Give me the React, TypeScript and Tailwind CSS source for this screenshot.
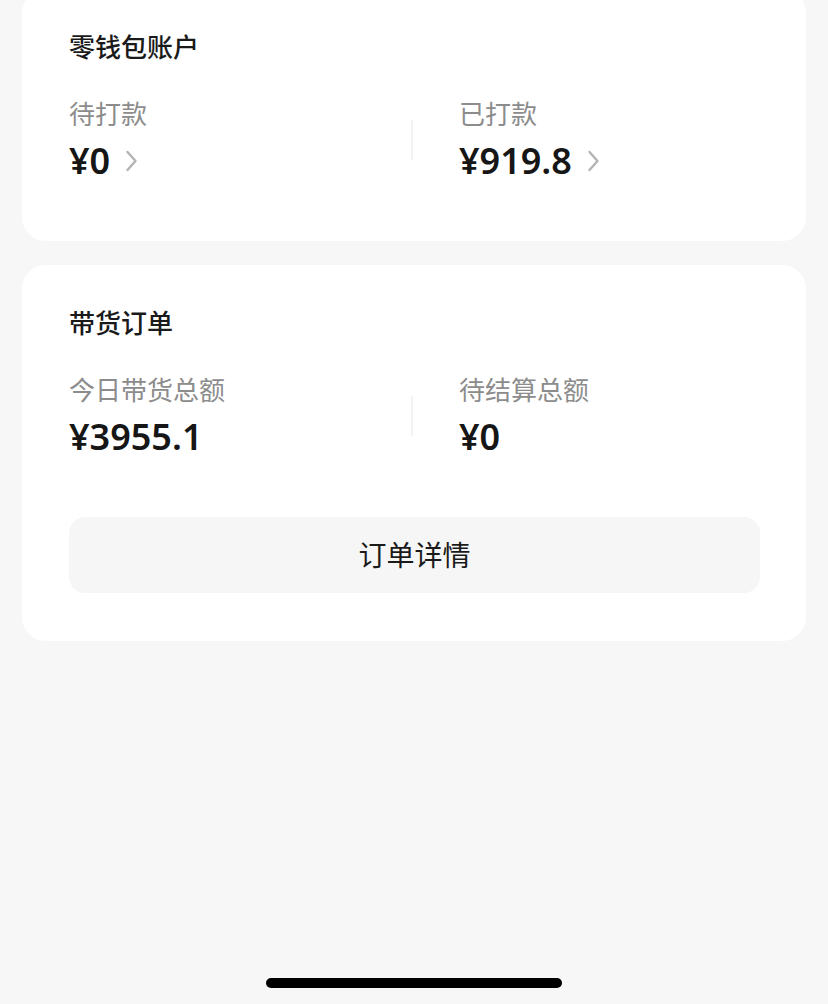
import React from "react";

const font = { fontFamily: '"Noto Sans", "Noto Sans CJK SC", sans-serif' };

function Chevron() {
  return (
    <svg width="13" height="24" viewBox="0 0 13 24" className="ml-[15px] shrink-0">
      <path d="M2.5 3 L10.5 12 L2.5 21" fill="none" stroke="#b3b3b3" strokeWidth="2.4" strokeLinecap="round" strokeLinejoin="round" />
    </svg>
  );
}

function Stat({ label, value, arrow }: { label: string; value: string; arrow?: boolean }) {
  return (
    <div className="flex flex-col">
      <div className="h-[36px] leading-[36px] text-[26px] text-[#8c8c8c]">{label}</div>
      <div className="mt-[7px] h-[44px] flex items-center">
        <span className="text-[36px] leading-[44px] font-semibold text-[#161616]">{value}</span>
        {arrow && <Chevron />}
      </div>
    </div>
  );
}

function Card({
  title,
  left,
  right,
  arrows,
  children,
  className,
}: {
  title: string;
  left: [string, string];
  right: [string, string];
  arrows?: boolean;
  children?: React.ReactNode;
  className?: string;
}) {
  return (
    <div className={"bg-white rounded-[24px] pl-[47px] pr-[46px] pt-[40px] " + (className ?? "")}>
      <div className="h-[36px] leading-[36px] text-[26px] font-medium text-[#1a1a1a]">{title}</div>
      <div className="mt-[31px] flex items-center">
        <div className="w-[342px]">
          <Stat label={left[0]} value={left[1]} arrow={arrows} />
        </div>
        <div className="w-[2px] h-[40px] bg-[#f2f2f2]" />
        <div className="pl-[46px]">
          <Stat label={right[0]} value={right[1]} arrow={arrows} />
        </div>
      </div>
      {children}
    </div>
  );
}

export default function App() {
  return (
    <div className="w-[828px] h-[1004px] bg-[#f7f7f7] overflow-hidden flex flex-col" style={font}>
      <div className="mt-[-11px] px-[22px] flex flex-col gap-[24px]">
        <Card
          title="零钱包账户"
          left={["待打款", "¥0"]}
          right={["已打款", "¥919.8"]}
          arrows
          className="pb-[58px]"
        />
        <Card
          title="带货订单"
          left={["今日带货总额", "¥3955.1"]}
          right={["待结算总额", "¥0"]}
          className="pb-[48px]"
        >
          <div className="mt-[58px] h-[76px] rounded-[16px] bg-[#f6f6f6] flex items-center justify-center text-[28px] text-[#1a1a1a]">
            订单详情
          </div>
        </Card>
      </div>
      <div className="flex-1" />
      <div className="flex justify-center pb-[16px]">
        <div className="w-[296px] h-[10px] rounded-full bg-black" />
      </div>
    </div>
  );
}
